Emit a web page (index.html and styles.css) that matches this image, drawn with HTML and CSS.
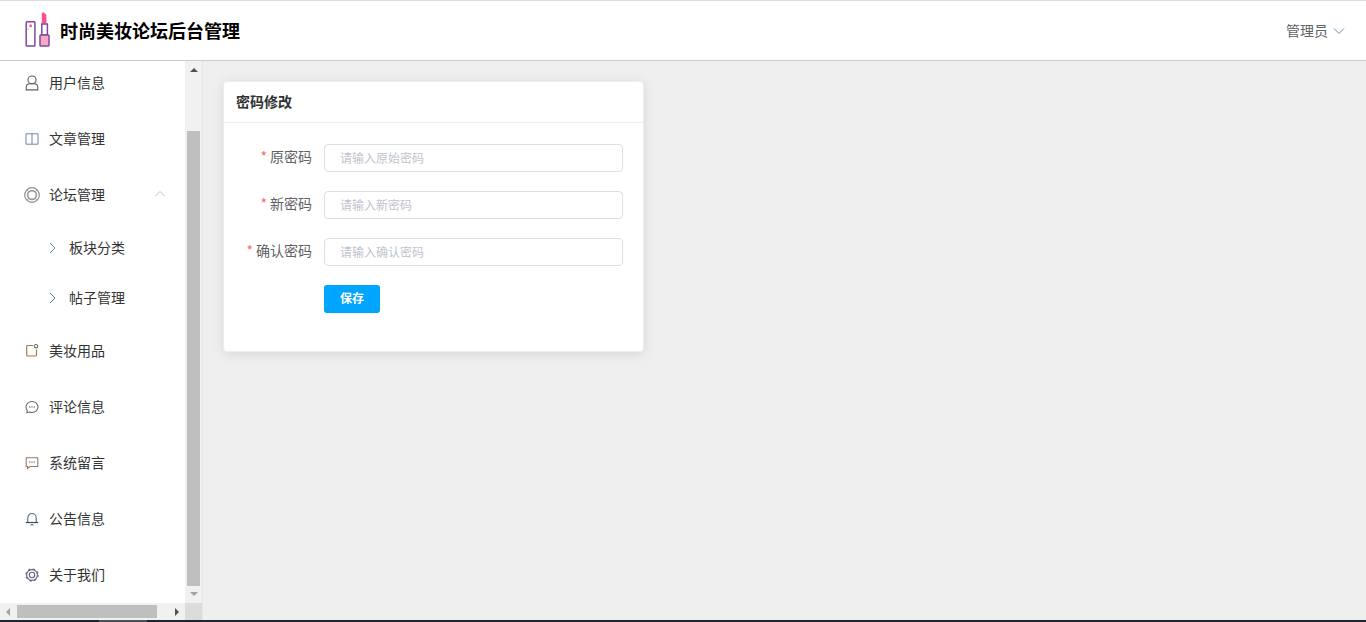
FILE: index.html
```html
<!DOCTYPE html>
<html lang="en">
<head>
    <meta charset="UTF-8">
    <meta name="viewport" content="width=device-width, initial-scale=1.0">
    <title>时尚美妆论坛后台管理</title>
    <link rel="stylesheet" href="styles.css">
</head>
<body>
    <!-- Header -->
    <header class="header">
        <svg class="logo" viewBox="0 0 26 36" fill="none">
            <rect x="1.2" y="9.7" width="8.7" height="24.3" rx="0.8" stroke="#7d4b97" stroke-width="1.5" fill="#fff"/>
            <circle cx="5.7" cy="13.7" r="1.5" fill="#ff5c9a"/>
            <circle cx="3.3" cy="17.3" r="0.8" fill="#ff8fb8"/>
            <path d="M16.8 11.5V1.5L18.2 0L21.4 3V11.5z" fill="#ff4f8e"/>
            <rect x="16.8" y="12" width="5.6" height="11" fill="#fff" stroke="#7d4b97" stroke-width="1.5"/>
            <rect x="15" y="23" width="9" height="11" rx="0.8" fill="#f9a8c9" stroke="#7d4b97" stroke-width="1.5"/>
        </svg>
        <h1 class="site-title">时尚美妆论坛后台管理</h1>
        <div class="user-menu">
            <span>管理员</span>
            <svg class="user-arrow" viewBox="0 0 12 8" fill="none"><path d="M1 1.5l5 5 5-5" stroke="#6d8db5" stroke-width="1"/></svg>
        </div>
    </header>

    <div class="layout">
        <!-- Sidebar -->
        <aside class="sidebar">
            <div class="menu-viewport">
                <ul class="menu">
                    <li class="menu-item">
                        <svg class="menu-icon icon-tall" viewBox="0 0 14 16" fill="none"><path d="M3 5C3 2.6 4.7 1 7 1C9.3 1 11 2.6 11 5C11 7.2 9.3 8.8 7 8.8C4.7 8.8 3 7.2 3 5z" stroke="#7a5c48" stroke-width="1.1"/><path d="M1.2 14.9V12.6C1.2 10.4 2.9 8.8 5 8.8H9C11.1 8.8 12.8 10.4 12.8 12.6V14.9z" stroke="#5c5a6a" stroke-width="1.1"/></svg>
                        <span>用户信息</span>
                    </li>
                    <li class="menu-item">
                        <svg class="menu-icon" viewBox="0 0 14 14" fill="none"><path d="M1 1.8H13V12.2H1zM7 1.8V12.2" stroke="#6b86a8" stroke-width="1"/></svg>
                        <span>文章管理</span>
                    </li>
                    <li class="menu-item">
                        <svg class="menu-icon menu-icon-big" viewBox="0 0 16 16" fill="none"><circle cx="8" cy="8" r="7.3" stroke="#8e8e8e" stroke-width="1.2"/><circle cx="8" cy="8" r="4.4" stroke="#9a9a9a" stroke-width="1.6"/><path d="M3 3l2 2M13 3l-2 2M3 13l2-2M13 13l-2-2" stroke="#9a9a9a"/></svg>
                        <span>论坛管理</span>
                        <svg class="menu-arrow" viewBox="0 0 12 8" fill="none"><path d="M1.5 6l4.5-4.5L10.5 6" stroke="#a9c0d8"/></svg>
                    </li>
                    <li class="sub-item">
                        <svg class="sub-arrow" viewBox="0 0 8 12" fill="none"><path d="M1 1l5 5-5 5" stroke="#5f7f9f" stroke-width="1"/></svg>
                        <span>板块分类</span>
                    </li>
                    <li class="sub-item">
                        <svg class="sub-arrow" viewBox="0 0 8 12" fill="none"><path d="M1 1l5 5-5 5" stroke="#5f7f9f" stroke-width="1"/></svg>
                        <span>帖子管理</span>
                    </li>
                    <li class="menu-item">
                        <svg class="menu-icon" viewBox="0 0 14 14" fill="none"><path d="M8 1.5H2.7Q1.7 1.5 1.7 2.5V11Q1.7 12 2.7 12H10.5Q11.5 12 11.5 11V5.5" stroke="#a17c4a" stroke-width="1.2"/><circle cx="11" cy="2.2" r="1.7" stroke="#77706a" stroke-width="1.1"/></svg>
                        <span>美妆用品</span>
                    </li>
                    <li class="menu-item">
                        <svg class="menu-icon" viewBox="0 0 14 14" fill="none"><path d="M7 1.5C3.5 1.5 1 3.9 1 7C1 8.4 1.5 9.6 2.3 10.5L1.8 12.8L4.4 12C5.2 12.4 6 12.5 7 12.5C10.5 12.5 13 10.1 13 7C13 3.9 10.5 1.5 7 1.5z" stroke="#6e6a62" stroke-width="1.1"/><path d="M4.2 7h1.2M6.4 7h1.2M8.6 7h1.2" stroke="#44474e" stroke-width="1.2"/></svg>
                        <span>评论信息</span>
                    </li>
                    <li class="menu-item">
                        <svg class="menu-icon" viewBox="0 0 14 14" fill="none"><path d="M1.2 1.8H12.8V10.5H5L2.5 12.5V10.5H1.2z" stroke="#947a64" stroke-width="1.1"/><path d="M4.2 6h1.2M6.4 6h1.2M8.6 6h1.2" stroke="#44474e" stroke-width="1.2"/></svg>
                        <span>系统留言</span>
                    </li>
                    <li class="menu-item">
                        <svg class="menu-icon" viewBox="0 0 14 14" fill="none"><path d="M2.8 10.5V6C2.8 3.5 4.6 1.5 7 1.5C9.4 1.5 11.2 3.5 11.2 6V10.5" stroke="#4f6d8c" stroke-width="1.1"/><path d="M0.8 10.5H13.2" stroke="#3e4654" stroke-width="1.2"/><path d="M5.6 12.8H8.4" stroke="#4f6d8c" stroke-width="1.2"/></svg>
                        <span>公告信息</span>
                    </li>
                    <li class="menu-item">
                        <svg class="menu-icon" viewBox="0 0 14 14" fill="none"><circle cx="7" cy="7" r="5.4" stroke="#5f6680" stroke-width="1.1"/><circle cx="7" cy="7" r="6.1" stroke="#5f6680" stroke-width="1.1" stroke-dasharray="2.4 2.4"/><circle cx="7" cy="7" r="2.7" stroke="#5f6680" stroke-width="1.1"/></svg>
                        <span>关于我们</span>
                    </li>
                </ul>
            </div>

            <!-- Vertical scrollbar -->
            <div class="scroll-v">
                <span class="arrow-up"></span>
                <div class="thumb-v"></div>
                <span class="arrow-down"></span>
            </div>

            <!-- Horizontal scrollbar -->
            <div class="scroll-h">
                <span class="arrow-left"></span>
                <div class="thumb-h"></div>
                <span class="arrow-right"></span>
            </div>
            <div class="scroll-corner"></div>
        </aside>

        <!-- Main Content -->
        <main class="content">
            <section class="card">
                <div class="card-header">密码修改</div>
                <form class="card-body">
                    <div class="form-row">
                        <label class="form-label"><i>*</i>原密码</label>
                        <input class="form-input" type="password" placeholder="请输入原始密码">
                    </div>
                    <div class="form-row">
                        <label class="form-label"><i>*</i>新密码</label>
                        <input class="form-input" type="password" placeholder="请输入新密码">
                    </div>
                    <div class="form-row">
                        <label class="form-label"><i>*</i>确认密码</label>
                        <input class="form-input" type="password" placeholder="请输入确认密码">
                    </div>
                    <div class="form-row">
                        <span class="form-label"></span>
                        <button class="save-button" type="button">保存</button>
                    </div>
                </form>
            </section>
        </main>
    </div>

    <!-- Bottom edge -->
    <div class="bottom-edge"><span class="bottom-mark"></span></div>
</body>
</html>
```

FILE: styles.css
```css
/* Body and general settings */
* {
    box-sizing: border-box;
}

html, body {
    height: 100%;
}

body {
    margin: 0;
    display: flex;
    flex-direction: column;
    overflow: hidden;
    background-color: #fff;
    color: #333;
    font-family: "Noto Sans CJK SC", "Liberation Sans", sans-serif;
    font-size: 14px;
}

/* Header */
.header {
    height: 61px;
    flex: none;
    display: flex;
    align-items: center;
    padding: 0 21px 0 25px;
    background-color: #fff;
    border-top: 1px solid #ddd;
    border-bottom: 1px solid #ccc;
}

.logo {
    width: 26px;
    height: 36px;
    margin-right: 9px;
    margin-bottom: 1px;
    flex: none;
}

.site-title {
    margin: 0 0 2px;
    font-size: 18px;
    font-weight: 700;
    color: #000;
}

.user-menu {
    margin-left: auto;
    display: flex;
    align-items: center;
    color: #606266;
}

.user-menu span {
    margin-bottom: 2px;
}

.user-arrow {
    width: 12px;
    height: 8px;
    margin-left: 5px;
}

/* Sidebar */
.layout {
    flex: 1;
    min-height: 0;
    display: flex;
}

.sidebar {
    width: 203px;
    flex: none;
    display: grid;
    grid-template-columns: 185px 17px;
    grid-template-rows: 1fr 17px;
    border-right: 1px solid #e6e6e6;
}

.menu-viewport {
    overflow: hidden;
    background-color: #fff;
}

.menu {
    list-style: none;
    margin: -6px 0 0;
    padding: 0;
}

.menu-item,
.sub-item {
    display: flex;
    align-items: center;
    color: #333;
}

.menu-item span,
.sub-item span {
    margin-bottom: 2px;
}

.menu-item {
    height: 56px;
    padding-left: 25px;
}

.sub-item {
    height: 50px;
    padding-left: 49px;
}

.menu-icon {
    width: 14px;
    height: 14px;
    margin-right: 10px;
    flex: none;
}

.icon-tall {
    height: 16px;
}

.menu-icon-big {
    width: 16px;
    height: 16px;
    margin-left: -1px;
    margin-right: 9px;
}

.menu-arrow {
    width: 12px;
    height: 8px;
    margin-left: 49px;
    margin-bottom: 2px;
}

.sub-arrow {
    width: 8px;
    height: 12px;
    margin-right: 12px;
    flex: none;
}

/* Scrollbars */
.scroll-v {
    display: flex;
    flex-direction: column;
    align-items: center;
    background-color: #f1f1f1;
}

.thumb-v {
    width: 13px;
    height: 455px;
    margin-top: 59px;
    background-color: #bfbfbf;
}

.arrow-up {
    margin-top: 7px;
    border: 4px solid transparent;
    border-top: 0;
    border-bottom: 4px solid #505050;
}

.arrow-down {
    margin-top: 6px;
    border: 4px solid transparent;
    border-bottom: 0;
    border-top: 4px solid #a3a3a3;
}

.scroll-h {
    display: flex;
    align-items: center;
    background-color: #f1f1f1;
}

.thumb-h {
    width: 140px;
    height: 13px;
    margin-left: 7px;
    background-color: #bfbfbf;
}

.arrow-left {
    margin-left: 6px;
    border: 4px solid transparent;
    border-left: 0;
    border-right: 4px solid #a3a3a3;
}

.arrow-right {
    margin-left: 18px;
    border: 4px solid transparent;
    border-right: 0;
    border-left: 4px solid #505050;
}

.scroll-corner {
    background-color: #dcdcdc;
}

/* Main content */
.content {
    flex: 1;
    padding: 20px 0 0 20px;
    background-color: #efefef;
}

.card {
    width: 421px;
    height: 271px;
    background-color: #fff;
    border: 1px solid #ebeef5;
    border-radius: 4px;
    box-shadow: 0 2px 12px rgba(0, 0, 0, 0.1);
}

.card-header {
    height: 41px;
    padding-left: 12px;
    line-height: 38px;
    font-weight: 700;
    color: #303133;
    border-bottom: 1px solid #ebeef5;
}

.card-body {
    display: flex;
    flex-direction: column;
    gap: 19px;
    padding-top: 21px;
}

.form-row {
    display: flex;
    align-items: center;
    height: 28px;
}

.form-label {
    width: 88px;
    margin-right: 12px;
    margin-bottom: 4px;
    text-align: right;
    color: #606266;
}

.form-label i {
    margin-right: 3px;
    font-style: normal;
    color: #f56c6c;
}

.form-input {
    width: 299px;
    height: 28px;
    padding: 0 15px 2px;
    border: 1px solid #dcdfe6;
    border-radius: 4px;
    background-color: #fff;
    font-family: inherit;
    font-size: 12px;
}

.form-input::placeholder {
    color: #c0c4cc;
    opacity: 1;
}

.save-button {
    width: 56px;
    height: 28px;
    padding: 0 0 4px;
    border: none;
    border-radius: 3px;
    background-color: #00a5ff;
    color: #fff;
    font-family: inherit;
    font-size: 12px;
    font-weight: 700;
    cursor: pointer;
}

/* Bottom edge */
.bottom-edge {
    height: 2px;
    flex: none;
    padding-left: 99px;
    background-color: #1f2430;
}

.bottom-mark {
    display: block;
    width: 48px;
    height: 2px;
    background-color: #4a4e57;
}
```
